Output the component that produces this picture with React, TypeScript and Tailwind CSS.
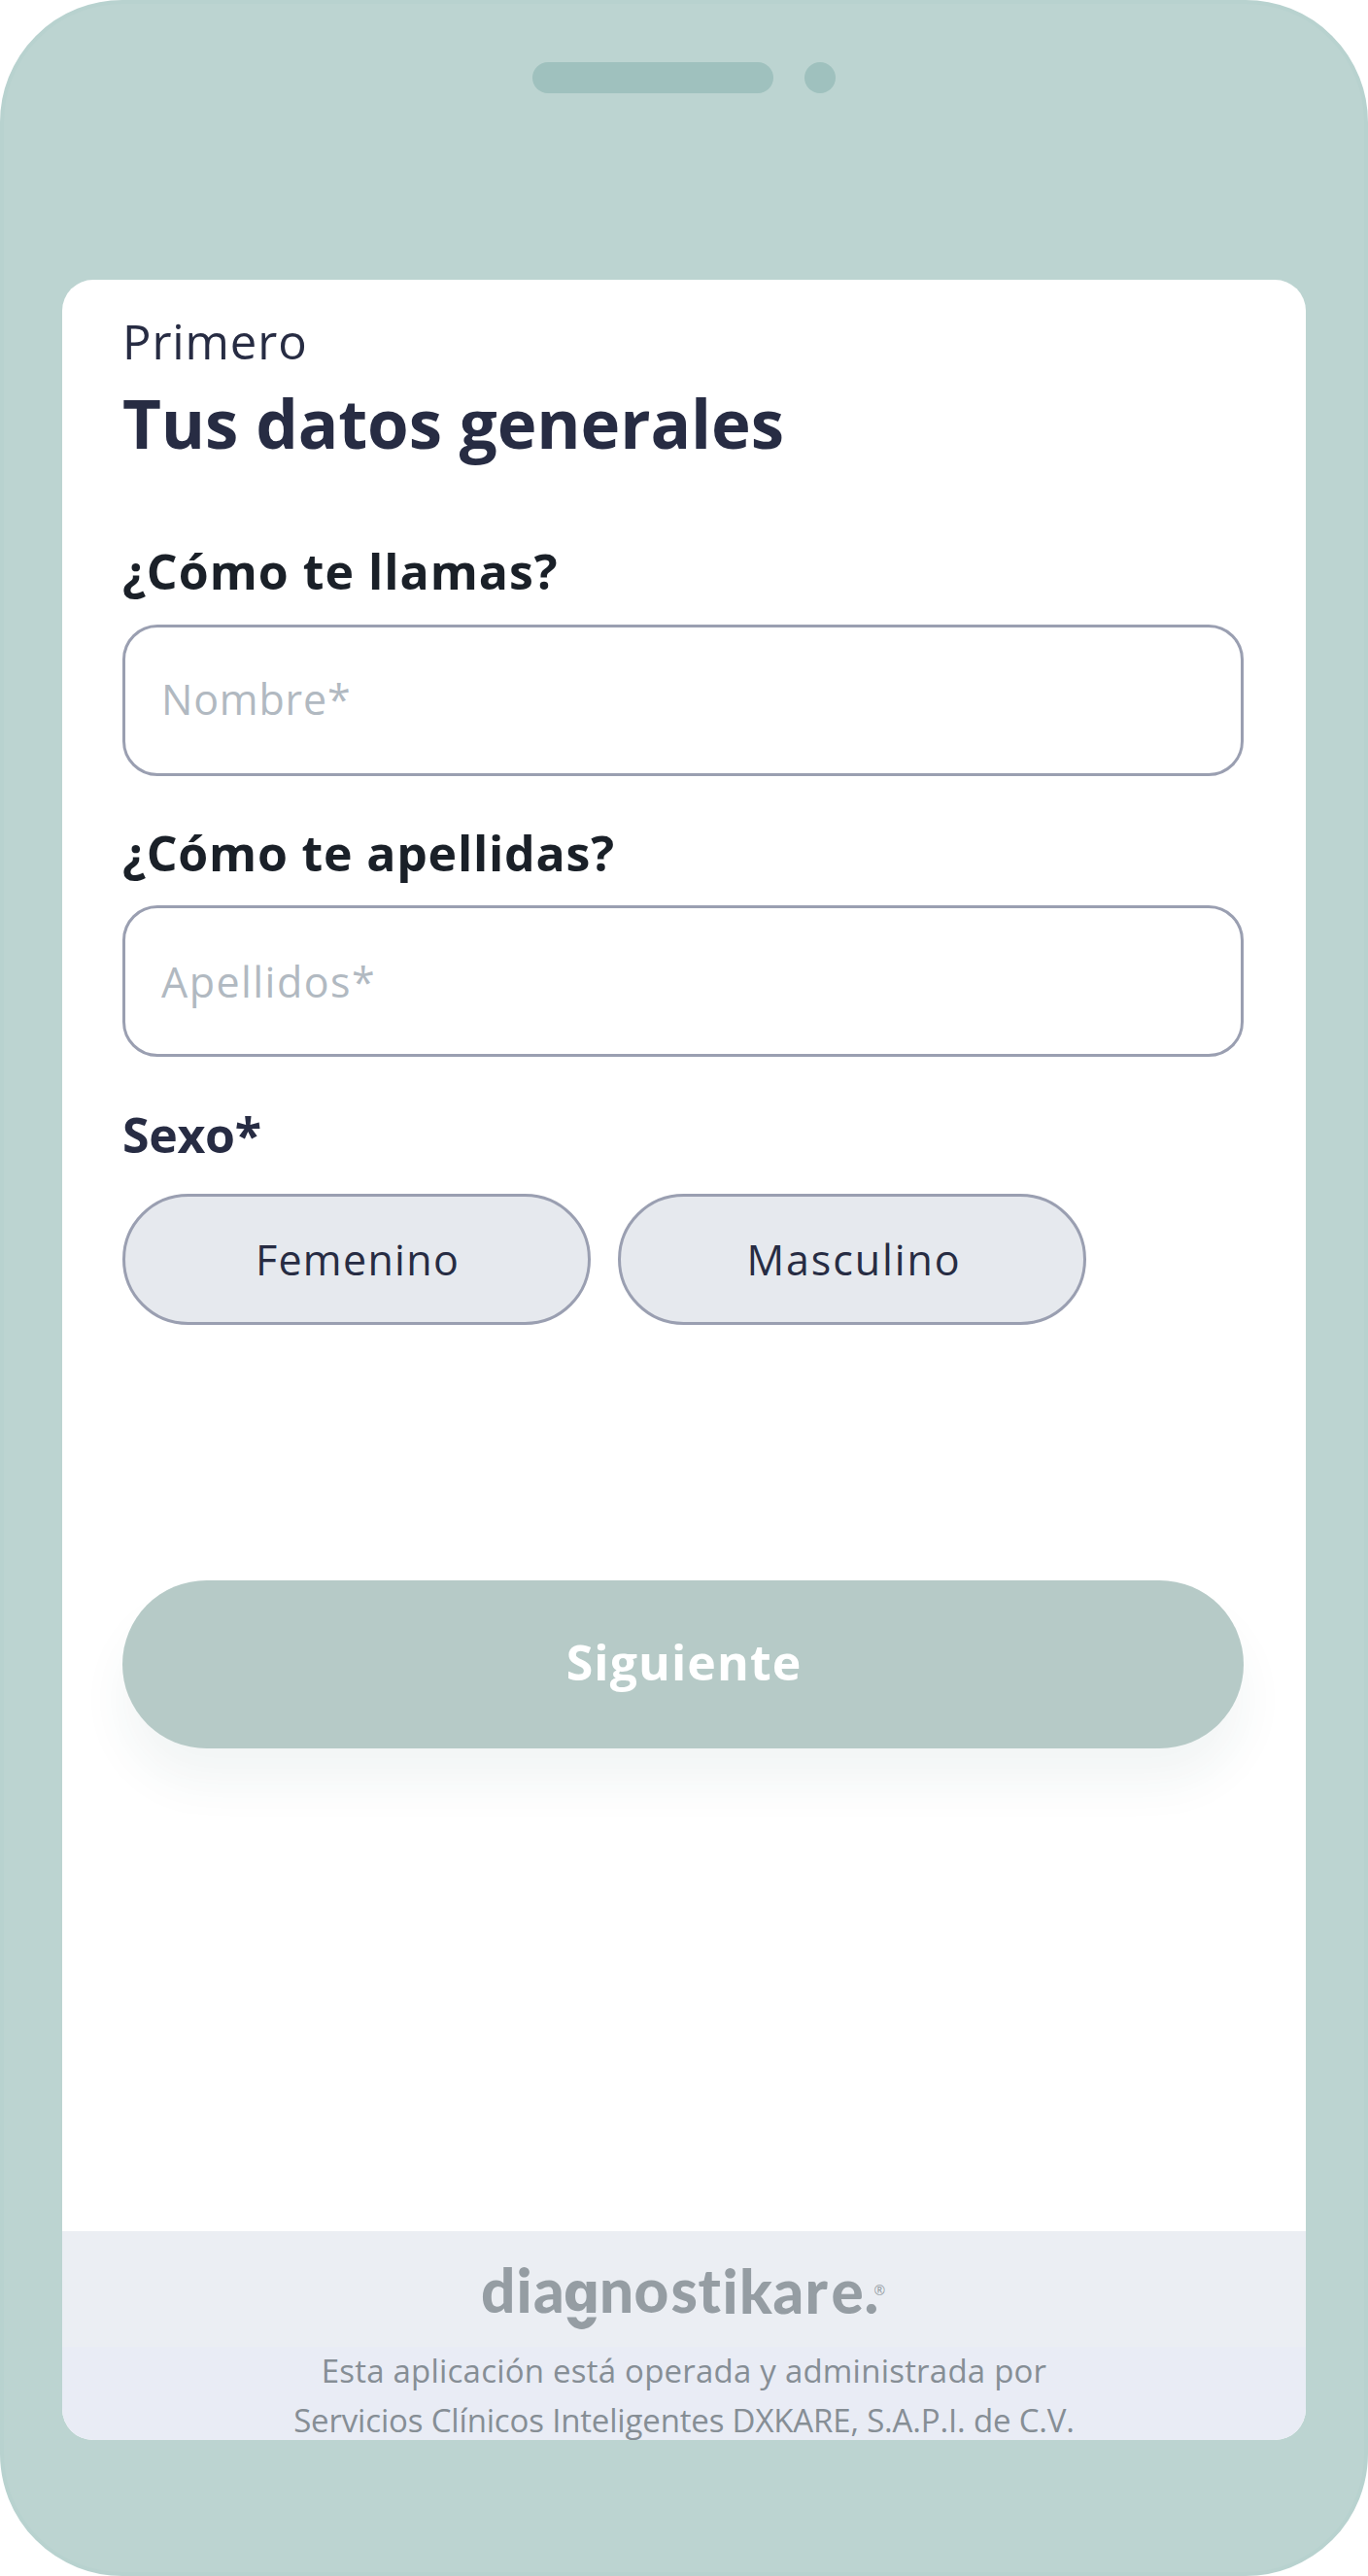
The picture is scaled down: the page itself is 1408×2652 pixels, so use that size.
import { useState } from "react";

// Logo diagnostikare, la sonrisa va debajo de la "g"
function LogoDiagnostikare() {
  return (
    <svg width="450" height="100" viewBox="0 0 450 100" fill="#959da3" role="img" aria-label="diagnostikare">
      <defs>
        <clipPath id="recorte-g">
          <rect x="95" y="30" width="45" height="41" />
        </clipPath>
      </defs>
      <g className="font-['Lato',sans-serif] font-black text-[62px]">
        <text x="15 51.5 69" y="70.7">dia</text>
        <text x="137 172.5 210.5 238.5 263.5 281 315.5 348.5 375.5 409.5" y="71 71 71 71.2 71.5 71.6 71.7 71.8 71.9 71.9">
          nostikare.
        </text>
      </g>
      <text x="100" y="70" clipPath="url(#recorte-g)" className="font-['Inter',sans-serif] font-extrabold text-[57px]">
        g
      </text>
      <path d="M103.500 75.500h9.500c3 6.500 8.500 6.500 11.500 0h9.500c-4 16.500-26.500 16.500-30.500 0z" />
      <text x="419.5" y="52.5" className="font-['Open_Sans',sans-serif] text-[14px]">®</text>
    </svg>
  );
}

function Campo({ label, placeholder, value, onChange, inputClass, labelClass }: any) {
  return (
    <div className="flex flex-col">
      <label className={`h-[60px] leading-[60px] text-[50px] font-bold text-[#1a2028] whitespace-nowrap ${labelClass}`}>
        {label}
      </label>
      <input
        type="text"
        placeholder={placeholder}
        value={value}
        onChange={(e) => onChange(e.target.value)}
        className={`h-[156px] w-full rounded-[36px] border-[3px] border-[#9a9fb1] bg-white text-[43px] text-[#272c43] placeholder:text-[#b1b9c1] outline-none ${inputClass}`}
      />
    </div>
  );
}

export default function App() {
  const [nombre, setNombre] = useState("");
  const [apellidos, setApellidos] = useState("");
  const [sexo, setSexo] = useState("");

  const opciones = [
    { id: "Femenino", clase: "pl-[2px] tracking-[1.3px]" },
    { id: "Masculino", clase: "pl-[4px] tracking-[1.9px]" },
  ];

  return (
    <div className="w-[1408px] h-[2652px] rounded-[126px] border-4 border-[#b8d2cf] bg-[#bcd4d1] px-[60px] pb-[136px] flex flex-col font-['Open_Sans',sans-serif]">
      {/* BOCINA Y CAMARA */}
      <div className="h-[284px] pt-[60px] flex justify-center gap-8 shrink-0">
        <div className="w-[248px] h-8 rounded-full bg-[#9fc1be]"></div>
        <div className="w-8 h-8 rounded-full bg-[#9fc1be]"></div>
      </div>

      {/* PANTALLA */}
      <main className="flex-1 min-h-0 rounded-[32px] bg-white overflow-hidden flex flex-col">
        <form className="pl-[62px] pr-16 pt-[31px] flex flex-col" onSubmit={(e) => e.preventDefault()}>
          <p className="h-16 leading-[64px] text-[49px] tracking-[0.9px] text-[#272c43]">Primero</p>
          <h1 className="mt-3 h-20 leading-[80px] text-[69px] font-bold tracking-[-0.1px] text-[#272c43] whitespace-nowrap">
            Tus datos generales
          </h1>

          <div className="mt-[83px]">
            <Campo
              label="¿Cómo te llamas?"
              placeholder="Nombre*"
              value={nombre}
              onChange={setNombre}
              labelClass="tracking-[1px] mb-[25px]"
              inputClass="pl-[37px] pb-1 tracking-[0.8px]"
            />
          </div>
          <div className="mt-[49px]">
            <Campo
              label="¿Cómo te apellidas?"
              placeholder="Apellidos*"
              value={apellidos}
              onChange={setApellidos}
              labelClass="tracking-[0.8px] mb-6"
              inputClass="pl-[37px] tracking-[1.45px]"
            />
          </div>

          {/* SEXO */}
          <p className="mt-[50px] h-[60px] leading-[60px] text-[50px] font-bold tracking-[-0.3px] text-[#272c43]">Sexo*</p>
          <div className="mt-[31px] flex gap-[28px]">
            {opciones.map((o) => (
              <button
                key={o.id}
                type="button"
                aria-pressed={sexo === o.id}
                onClick={() => setSexo(o.id)}
                className={`w-[482px] h-[135px] rounded-full border-[3px] border-[#9a9fb1] bg-[#e6e9ee] pt-[2px] text-[43px] text-[#272c43] ${o.clase}`}
              >
                {o.id}
              </button>
            ))}
          </div>

          <button
            type="submit"
            className="mt-[263px] h-[173px] w-full rounded-full bg-[#b6cac7] pb-[5px] pl-[2px] text-[50px] font-bold tracking-[1.1px] text-white shadow-[0_36px_48px_rgba(30,90,90,0.058)]"
          >
            Siguiente
          </button>
        </form>

        {/* PIE DE PAGINA */}
        <footer className="mt-auto h-[215px] shrink-0 overflow-hidden bg-[#e9ecf5] text-center text-[33px] text-[#868e95]">
          <div className="h-[119px] bg-[#ebeef3] pt-[13px] pl-[1px] flex justify-center">
            <LogoDiagnostikare />
          </div>
          <div className="-mt-px leading-[51px] whitespace-nowrap">
            <p className="tracking-[0.22px]">Esta aplicación está operada y administrada por</p>
            <p className="tracking-[-0.17px]">Servicios Clínicos Inteligentes DXKARE, S.A.P.I. de C.V.</p>
          </div>
        </footer>
      </main>
    </div>
  );
}
